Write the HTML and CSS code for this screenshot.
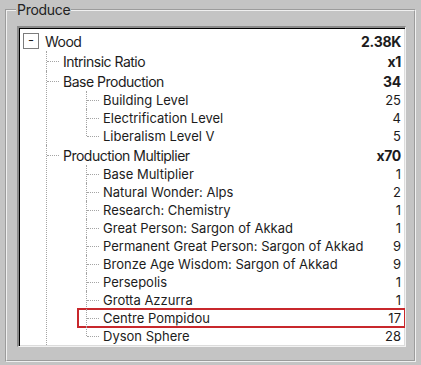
FILE: index.html
```html
<!DOCTYPE html>
<html lang="en">
<head>
  <meta charset="UTF-8">
  <title>Produce</title>
  <meta name="viewport" content="width=device-width, initial-scale=1">
  <link rel="stylesheet" href="styles.css">
</head>
<body>

<fieldset class="panel">
  <legend>Produce</legend>

  <div class="tree">
    <div class="row root">
      <span class="toggle">-</span>
      <span class="label">Wood</span>
      <span class="value">2.38K</span>
    </div>

    <ul class="branch top">
      <li>
        <div class="row big"><span class="label">Intrinsic Ratio</span><span class="value">x1</span></div>
      </li>
      <li>
        <div class="row big"><span class="label">Base Production</span><span class="value">34</span></div>
        <ul class="branch">
          <li><div class="row"><span class="label">Building Level</span><span class="value">25</span></div></li>
          <li><div class="row"><span class="label">Electrification Level</span><span class="value">4</span></div></li>
          <li class="last"><div class="row"><span class="label">Liberalism Level V</span><span class="value">5</span></div></li>
        </ul>
      </li>
      <li>
        <div class="row big"><span class="label">Production Multiplier</span><span class="value">x70</span></div>
        <ul class="branch">
          <li><div class="row"><span class="label">Base Multiplier</span><span class="value">1</span></div></li>
          <li><div class="row"><span class="label">Natural Wonder: Alps</span><span class="value">2</span></div></li>
          <li><div class="row"><span class="label">Research: Chemistry</span><span class="value">1</span></div></li>
          <li><div class="row"><span class="label">Great Person: Sargon of Akkad</span><span class="value">1</span></div></li>
          <li><div class="row"><span class="label">Permanent Great Person: Sargon of Akkad</span><span class="value">9</span></div></li>
          <li><div class="row"><span class="label">Bronze Age Wisdom: Sargon of Akkad</span><span class="value">9</span></div></li>
          <li><div class="row"><span class="label">Persepolis</span><span class="value">1</span></div></li>
          <li><div class="row"><span class="label">Grotta Azzurra</span><span class="value">1</span></div></li>
          <li><div class="row marked"><span class="label">Centre Pompidou</span><span class="value">17</span></div></li>
          <li class="last"><div class="row"><span class="label">Dyson Sphere</span><span class="value">28</span></div></li>
        </ul>
      </li>
    </ul>
  </div>
</fieldset>

</body>
</html>
```

FILE: styles.css
```css
body {
  margin: 0;
  padding-top: 1px;
  background: #c4c4c4;
  font-family: Inter, "Liberation Sans", sans-serif;
  color: #1c1c1c;
}

.panel {
  margin: 0 5px;
  padding: 7px 8px 13px 10px;
  border: 2px groove #f0f0f0;
}

.panel legend {
  padding: 0 1px;
  margin-left: -1px;
  font-size: 14px;
  letter-spacing: -0.3px;
  line-height: 18px;
  color: #222;
}

.tree {
  height: 321px;
  box-sizing: border-box;
  overflow: hidden;
  background: white;
  border-style: solid;
  border-width: 2px 1px 1px 2px;
  border-color: #8a8a8a #f2f2f2 #f2f2f2 #8a8a8a;
  box-shadow: inset 1px 1px 0 #000, inset -1px -1px 0 #dcdcdc;
  padding: 3px 0 0 0;
}

.row {
  position: relative;
  display: flex;
  align-items: center;
  height: 18px;
  padding: 0 4px 0 25px;
  font-size: 13px;
}

.row.big,
.row.root {
  height: 20px;
  font-size: 14px;
  letter-spacing: -0.5px;
}

.row.big .value,
.row.root .value {
  font-weight: bold;
  letter-spacing: -0.3px;
}

.row.root {
  padding-left: 4px;
}

.toggle {
  width: 14px;
  height: 14px;
  border: 1px solid #7c7c7c;
  margin-right: 6px;
  font-size: 13px;
  letter-spacing: 0;
  line-height: 12px;
  text-align: center;
}

.value {
  margin-left: auto;
}

.branch {
  list-style: none;
  margin: 0;
  padding-left: 40px;
}

.branch.top {
  padding-left: 19px;
}

.branch li {
  position: relative;
}

/* tree connectors */
.branch li::after {
  content: "";
  position: absolute;
  left: 8px;
  top: 0;
  bottom: 0;
  border-left: 1px dotted #a4a4a4;
}

.branch li.last::after {
  bottom: auto;
  height: 9px;
}

.branch > li > .row::before {
  content: "";
  position: absolute;
  left: 9px;
  top: 50%;
  width: 12px;
  border-top: 1px dotted #a4a4a4;
}

.row.marked {
  outline: 2px solid #c8282c;
  outline-offset: -1px;
}
```
